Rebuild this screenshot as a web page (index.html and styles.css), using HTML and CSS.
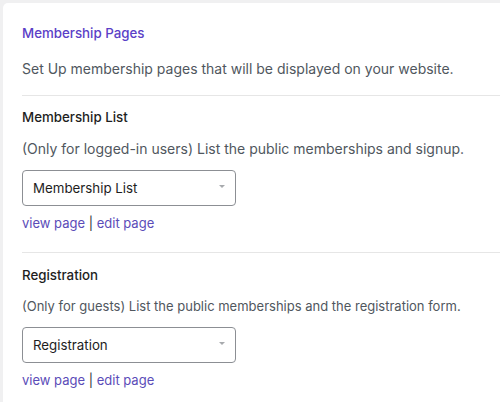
FILE: index.html
```html
<!DOCTYPE html>
<html>
<head>
<meta charset="utf-8">
<link rel="stylesheet" href="styles.css">
</head>
<body>
<div class="card">
  <h2 class="heading">Membership Pages</h2>
  <p class="desc first">Set Up membership pages that will be displayed on your website.</p>
  <div class="section">
    <h3 class="title">Membership List</h3>
    <p class="desc">(Only for logged-in users) List the public memberships and signup.</p>
    <div class="select"><span>Membership List</span><span class="caret"></span></div>
    <div class="links"><a href="#">view page</a> | <a href="#">edit page</a></div>
  </div>
  <div class="section">
    <h3 class="title">Registration</h3>
    <p class="desc small">(Only for guests) List the public memberships and the registration form.</p>
    <div class="select"><span>Registration</span><span class="caret"></span></div>
    <div class="links"><a href="#">view page</a> | <a href="#">edit page</a></div>
  </div>
</div>
</body>
</html>
```
FILE: styles.css
```css
html, body { margin: 0; padding: 0; }
body {
  background: #f0f0f1;
  font-family: Inter, "Noto Sans", sans-serif;
  font-size: 14px;
  line-height: 20px;
  height: 402px;
  overflow: hidden;
}
.card {
  margin: 3px 0 0 3px;
  background: #fff;
  border-top-left-radius: 5px;
  padding: 20px 0 0 19px;
  height: 379px;
}
.heading {
  margin: 0;
  font-size: 13.3px;
  font-weight: 500;
  color: #5b3fc7;
  line-height: 20px;
}
.desc {
  margin: 0;
  color: #50575e;
}
.desc.small { font-size: 13px; }
.desc.first { margin-top: 16px; }
.section {
  border-top: 1px solid #e6e6e6;
  margin-top: 16px;
  padding-top: 11px;
}
.section + .section { margin-top: 19px; padding-top: 12px; }
.title {
  margin: 0;
  font-size: 13.3px;
  font-weight: 500;
  color: #1e1e1e;
  line-height: 20px;
}
.section .desc { margin-top: 12px; }
.section + .section .desc { margin-top: 11px; }
.select {
  margin-top: 11px;
  width: 214px;
  height: 36px;
  box-sizing: border-box;
  border: 1px solid #8c8f94;
  border-radius: 4px;
  display: flex;
  align-items: center;
  justify-content: space-between;
  padding: 0 10px 0 10px;
  color: #1e1e1e;
  font-size: 13.3px;
}
.caret {
  width: 0; height: 0;
  border-left: 3px solid transparent;
  border-right: 3px solid transparent;
  border-top: 3px solid #a7aaad;
  margin-top: -3px;
}
.links {
  margin-top: 7px;
  color: #2c3338;
  font-size: 13px;
}
.links a { color: #5b4cb8; text-decoration: none; }
```
